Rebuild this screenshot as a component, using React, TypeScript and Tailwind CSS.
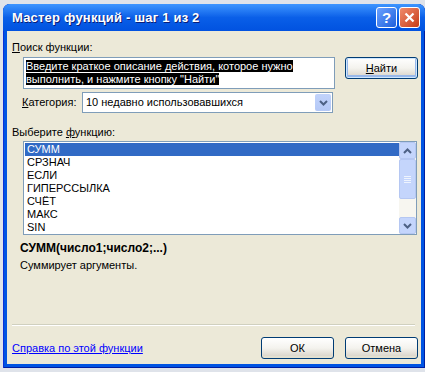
import React from "react";

const FUNCS = ["СУММ", "СРЗНАЧ", "ЕСЛИ", "ГИПЕРССЫЛКА", "СЧЁТ", "МАКС", "SIN"];

function XpButton({ children, focused }: { children: React.ReactNode; focused?: boolean }) {
  return (
    <button
      className={
        "w-[73px] h-[22px] rounded-[3px] border border-[#003c74] bg-gradient-to-b from-[#ffffff] via-[#f4f3ee] to-[#d6d0c5] text-[11px] text-black flex items-center justify-center " +
        (focused ? "shadow-[inset_0_0_0_1px_#cee7ff,inset_0_-1px_0_2px_#98b8ea]" : "shadow-[inset_0_-2px_0_0_#e3e0d0]")
      }
    >
      {children}
    </button>
  );
}

function Chevron({ up }: { up?: boolean }) {
  return (
    <svg width="9" height="6" viewBox="0 0 9 6">
      <path d={up ? "M1 5 L4.5 1.5 L8 5" : "M1 1 L4.5 4.5 L8 1"} stroke="#4d6185" strokeWidth="2" fill="none" />
    </svg>
  );
}

export default function App() {
  return (
    <div className="w-[425px] h-[372px] bg-[#dfe3ea] pt-[4px] pl-[3px] overflow-hidden font-['Liberation_Sans',Arial,sans-serif]">
      <div className="w-[422px] h-[364px] flex flex-col rounded-t-[7px] bg-[#0054e3] px-[4px] pb-[4px] shadow-[inset_1px_0_0_#0831d9,inset_-1px_0_0_#001ea0,inset_0_-1px_0_#001ea0]">
        {/* title bar */}
        <div className="h-[27px] flex items-center justify-between -mx-[4px] px-[9px] rounded-t-[7px] bg-gradient-to-b from-[#3d95ff] via-[#0a5fe8] to-[#0152e0]">
          <span className="text-white font-bold text-[13px] tracking-[0.2px] [text-shadow:1px_1px_0_#0a1e78]">
            Мастер функций - шаг 1 из 2
          </span>
          <div className="flex gap-[2px] -mr-[4px]">
            <div className="w-[21px] h-[21px] rounded-[3px] border border-white bg-gradient-to-br from-[#6aa1ff] to-[#1d5fdc] flex items-center justify-center text-white font-bold text-[15px] leading-none">
              ?
            </div>
            <div className="w-[21px] h-[21px] rounded-[3px] border border-white bg-gradient-to-br from-[#f08a6a] to-[#c63a12] flex items-center justify-center">
              <svg width="11" height="11" viewBox="0 0 11 11">
                <path d="M1.5 1.5 L9.5 9.5 M9.5 1.5 L1.5 9.5" stroke="white" strokeWidth="2.2" />
              </svg>
            </div>
          </div>
        </div>
        {/* client */}
        <div className="flex-1 bg-[#ece9d8] pl-[5px] pr-[3px] pt-[8px] flex flex-col text-[11px] text-black">
          <div className="h-[18px]">
            <span className="underline">П</span>оиск функции:
          </div>
          <div className="flex justify-between pl-[11px]">
            <div className="w-[312px] h-[32px] border border-[#7f9db9] bg-white px-[2px] pt-[2px] leading-[13px]">
              <span className="bg-black text-white">Введите краткое описание действия, которое нужно</span>
              <br />
              <span className="bg-black text-white">выполнить, и нажмите кнопку "Найти"</span>
            </div>
            <XpButton focused>
              <span className="underline">Н</span>айти
            </XpButton>
          </div>
          <div className="flex items-center mt-[3px] pl-[10px]">
            <span className="w-[60px]">
              <span className="underline">К</span>атегория:
            </span>
            <div className="w-[251px] h-[21px] border border-[#7f9db9] bg-white flex items-center justify-between pl-[3px] pr-[1px]">
              <span>10 недавно использовавшихся</span>
              <div className="w-[16px] h-[17px] rounded-[2px] bg-gradient-to-b from-[#c1d3fb] to-[#b4c8f6] flex items-center justify-center">
                <Chevron />
              </div>
            </div>
          </div>
          <div className="mt-[11px] h-[17px]">
            Выберите <span className="underline">ф</span>ункцию:
          </div>
          <div className="ml-[11px] w-[394px] h-[94px] border border-[#7f9db9] bg-white flex">
            <div className="flex-1 flex flex-col pt-[1px] pl-[1px]">
              {FUNCS.map((f, i) => (
                <div
                  key={f}
                  className={"h-[13px] leading-[13px] pl-[2px] " + (i === 0 ? "bg-[#316ac5] text-white" : "")}
                >
                  {f}
                </div>
              ))}
            </div>
            <div className="w-[17px] bg-[#f7f6f0] flex flex-col p-[0px]">
              <div className="h-[17px] rounded-[2px] border border-[#b5c7f2] bg-[#c4d5fc] flex items-center justify-center">
                <Chevron up />
              </div>
              <div className="h-[40px] rounded-[2px] border border-[#b5c7f2] bg-[#c4d5fc] flex flex-col items-center justify-center gap-[1px]">
                <div className="w-[7px] h-px bg-[#eef4fe]" />
                <div className="w-[7px] h-px bg-[#eef4fe]" />
                <div className="w-[7px] h-px bg-[#eef4fe]" />
                <div className="w-[7px] h-px bg-[#eef4fe]" />
              </div>
              <div className="flex-1" />
              <div className="h-[17px] rounded-[2px] border border-[#b5c7f2] bg-[#c4d5fc] flex items-center justify-center">
                <Chevron />
              </div>
            </div>
          </div>
          <div className="pl-[8px] mt-[6px] font-bold text-[12px] leading-[14px]">СУММ(число1;число2;...)</div>
          <div className="pl-[8px] mt-[4px] leading-[13px]">Суммирует аргументы.</div>
          <div className="flex-1" />
          <div className="h-px bg-[#d0d0bf] border-b border-white box-content mr-[3px]" />
          <div className="flex items-center justify-between mt-[11px] mb-[5px]">
            <span className="text-[#0000ff] underline">Справка по этой функции</span>
            <div className="flex gap-[11px]">
              <XpButton>ОК</XpButton>
              <XpButton>Отмена</XpButton>
            </div>
          </div>
        </div>
      </div>
    </div>
  );
}
